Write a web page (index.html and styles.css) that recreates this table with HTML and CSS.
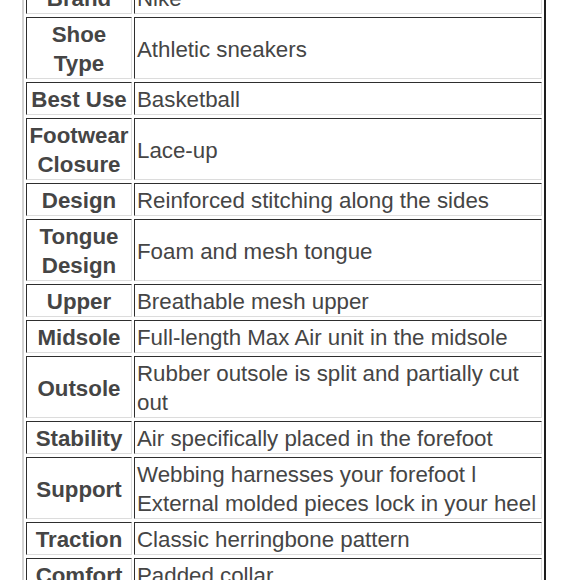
FILE: index.html
```html
<!DOCTYPE html>
<html lang="en">
<head>
<meta charset="utf-8">
<title>Shoe details</title>
<link rel="stylesheet" href="styles.css">
</head>
<body>
<div class="page">
  <table class="specs">
    <colgroup><col class="c-label"><col class="c-value"></colgroup>
    <tbody>
      <tr><th>Brand</th><td>Nike</td></tr>
      <tr><th>Shoe<br>Type</th><td>Athletic sneakers</td></tr>
      <tr><th>Best Use</th><td>Basketball</td></tr>
      <tr><th>Footwear<br>Closure</th><td>Lace-up</td></tr>
      <tr><th>Design</th><td>Reinforced stitching along the sides</td></tr>
      <tr><th>Tongue<br>Design</th><td>Foam and mesh tongue</td></tr>
      <tr><th>Upper</th><td>Breathable mesh upper</td></tr>
      <tr><th>Midsole</th><td>Full-length Max Air unit in the midsole</td></tr>
      <tr><th>Outsole</th><td>Rubber outsole is split and partially cut out</td></tr>
      <tr><th>Stability</th><td>Air specifically placed in the forefoot</td></tr>
      <tr><th>Support</th><td>Webbing harnesses your forefoot l External molded pieces lock in your heel</td></tr>
      <tr><th>Traction</th><td>Classic herringbone pattern</td></tr>
      <tr><th>Comfort</th><td>Padded collar</td></tr>
    </tbody>
  </table>
</div>
</body>
</html>
```
FILE: styles.css
```css
html, body {
  margin: 0;
  padding: 0;
  background: #ffffff;
}

.page {
  padding-left: 22px;
  font-family: "Liberation Sans", Arial, Helvetica, sans-serif;
  color: #454545;
}

.specs {
  margin-top: -24px;
  width: 524px;
  table-layout: fixed;
  border-collapse: separate;
  border-spacing: 2px 3px;
  border-style: solid;
  border-width: 2px;
  border-color: #d4d4d4 #1e1e1e #1e1e1e #d4d4d4;
  font-size: 22.3px;
  line-height: 29px;
}

.c-label { width: 106px; }
.c-value { width: 408px; }

.specs th,
.specs td {
  padding: 2px 2px 0;
  border-style: solid;
  border-width: 1px;
  border-color: #2e2e2e #dcdcdc #dcdcdc #2e2e2e;
  vertical-align: middle;
}

.specs th {
  font-weight: bold;
  text-align: center;
  white-space: nowrap;
}

.specs td {
  font-weight: normal;
  text-align: left;
}
```
